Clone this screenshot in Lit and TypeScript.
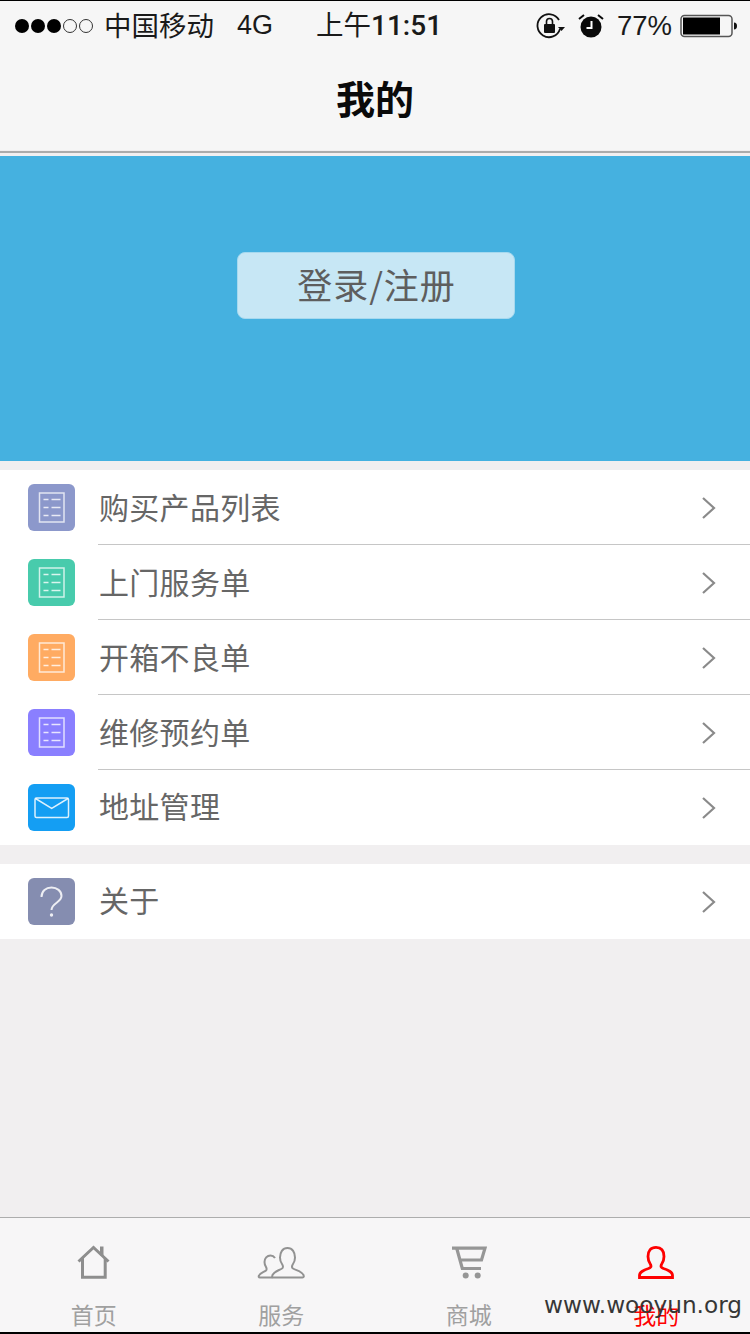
import { LitElement, html, css, svg } from 'lit';
import { customElement } from 'lit/decorators.js';

// document icon shared by the first four rows
const docIcon = svg`
  <rect x="11.500" y="9" width="24.500" height="29" fill="none" stroke="#fff" stroke-opacity=".75" stroke-width="1.500"/>
  <path d="M15.500 15.500h5M23.500 15.500h9M15.500 23.500h5M23.500 23.500h9M15.500 31.500h5M23.500 31.500h9" fill="none" stroke="#fff" stroke-opacity=".8" stroke-width="1.300"/>`;

const mailIcon = svg`
  <rect x="7" y="14" width="33.500" height="19.500" rx="1.500" fill="none" stroke="#fff" stroke-opacity=".85" stroke-width="1.500"/>
  <path d="M7.500 14.500l16.200 9.800L40 14.500" fill="none" stroke="#fff" stroke-opacity=".85" stroke-width="1.500"/>`;

const helpIcon = svg`
  <path d="M13.500 19c0-6 4.500-9.500 10-9.500s10 3.500 10 8.500c0 6.500-10 7-10 14" fill="none" stroke="#fff" stroke-opacity=".85" stroke-width="2"/>
  <circle cx="23.500" cy="37" r="1.700" fill="#fff" fill-opacity=".85"/>`;

const rows1 = [
  { label: '购买产品列表', color: '#8c98cb', icon: docIcon },
  { label: '上门服务单', color: '#48cbac', icon: docIcon },
  { label: '开箱不良单', color: '#ffab62', icon: docIcon },
  { label: '维修预约单', color: '#8a7fff', icon: docIcon },
  { label: '地址管理', color: '#149ef3', icon: mailIcon },
];

const rows2 = [{ label: '关于', color: '#858db0', icon: helpIcon }];

const tabs = [
  {
    label: '首页',
    width: 38,
    icon: svg`<path d="M3.500 16.500L18.500 2.500l15 14" fill="none" stroke="#8e8e8e" stroke-width="3"/>
      <path d="M25 1.500h3.500v9H25z" fill="#8e8e8e"/>
      <path d="M7.500 13v19.200h22.700V13" fill="none" stroke="#8e8e8e" stroke-width="3"/>`,
  },
  {
    label: '服务',
    width: 50,
    icon: svg`<path d="M16.500 32.500h30c1.500 0 1.500-1 1-2.500-1.500-3.500-7-4.500-10.500-6.500-1.500-1-1-3 0-4.500 1.500-2 2-4 2-6.500 0-5-2.500-9.500-7.500-9.500s-7.500 4.500-7.500 9.500c0 2.500.5 4.500 2 6.500 1 1.500 1.500 3.500 0 4.500-3.500 2-8 3-9.500 6.500-.5 1.500-.5 2.500 0 2.500z" fill="none" stroke="#929292" stroke-width="2"/>
      <path d="M16.500 32.500H4c-1.500 0-1.500-1-1-2 1-2.500 5-3.500 7-5 1-1 .5-2.500 0-3.500-1-1.500-1.500-3-1.500-5 0-3.500 2.500-6.500 6-6.500 2 0 3.500 1 4.500 2.500" fill="none" stroke="#929292" stroke-width="2"/>`,
  },
  {
    label: '商城',
    width: 38,
    icon: svg`<path d="M2 3.200H35L31.500 15H9.500M6.700 3.200l5.600 20.300H31" fill="none" stroke="#969696" stroke-width="3.200"/>
      <circle cx="15.700" cy="30.500" r="3" fill="#969696"/><circle cx="27.700" cy="30.500" r="3" fill="#969696"/>`,
  },
  {
    label: '我的',
    width: 38,
    active: true,
    icon: svg`<path d="M2.500 32.500v-2c0-4 4.500-5.500 9-7 2.500-1 3-2 2-4-1.500-2-2.500-5-2.500-8C11 5.500 14 2.300 19 2.300S27 5.500 27 11.500c0 3-1 6-2.500 8-1 2-.5 3 2 4 4.500 1.500 9 3 9 7v2z" fill="none" stroke="#fe0000" stroke-width="2.800"/>`,
  },
];

@customElement('app-root')
export class AppRoot extends LitElement {
  static styles = css`
    :host {
      display: flex;
      flex-direction: column;
      position: relative;
      width: 750px;
      height: 1334px;
      overflow: hidden;
      background: #f1eff0;
      font-family: 'Noto Sans CJK SC', 'Liberation Sans', sans-serif;
    }

    .top {
      background: #f6f6f6;
      border-top: 1px solid #000;
      height: 150px;
      box-sizing: border-box;
      flex: none;
    }

    .status {
      display: flex;
      align-items: center;
      height: 49px;
      color: #1a1a1a;
      font-size: 27.500px;
      line-height: 45px;
    }

    .dots {
      display: flex;
      gap: 2px;
      margin-left: 15px;
      margin-right: 11px;
    }

    .dot {
      width: 14px;
      height: 14px;
      border-radius: 50%;
      background: #000;
      box-sizing: border-box;
    }

    .dot.off {
      background: none;
      border: 1px solid #333;
    }

    .carrier {
      margin-bottom: 3px;
    }

    .net {
      margin-left: 23px;
      font-family: 'Liberation Sans', sans-serif;
      font-size: 27px;
    }

    .time {
      margin-left: 43px;
      margin-bottom: 3px;
    }

    .time span {
      font-family: Roboto, 'Liberation Sans', sans-serif;
      font-weight: 500;
      font-size: 28px;
    }

    .right {
      margin-left: auto;
      display: flex;
      align-items: center;
    }

    .pct {
      font-family: 'Liberation Sans', sans-serif;
      font-size: 27.500px;
      margin: 0 8px 0 13px;
    }

    .title {
      text-align: center;
      font-size: 39px;
      font-weight: 700;
      color: #0a0a0a;
      line-height: 94px;
      height: 100px;
    }

    .rule {
      flex: none;
      height: 2px;
      margin-top: 1px;
      background: #ababab;
    }

    .gap-white {
      flex: none;
      height: 3px;
      background: #f1eff0;
    }

    .banner {
      flex: none;
      height: 305px;
      background: #45b1e0;
      display: flex;
      justify-content: center;
      padding-top: 96px;
      padding-left: 1px;
      box-sizing: border-box;
    }

    .login {
      width: 278px;
      height: 67px;
      padding-left: 2px;
      border-radius: 8px;
      background: #c7e7f5;
      box-sizing: border-box;
      border: 1px solid #a6d9ef;
      color: #5e5e5e;
      font-size: 35px;
      line-height: 61px;
      text-align: center;
      letter-spacing: 1px;
    }

    .list {
      flex: none;
      background: #fff;
      margin-top: 9px;
    }

    .list.second {
      margin-top: 19px;
    }

    .row {
      display: flex;
      align-items: center;
      height: 75px;
      padding-left: 28px;
    }

    .icon {
      flex: none;
      width: 47px;
      height: 47px;
      border-radius: 6px;
      display: block;
    }

    .label {
      flex: 1;
      align-self: stretch;
      display: flex;
      align-items: center;
      margin-left: 23px;
      box-sizing: border-box;
      font-size: 30px;
      color: #666;
      border-bottom: 1px solid #c6c6c6;
    }

    .label span {
      padding: 0 0 3px 1px;
      letter-spacing: 0.3px;
    }

    .row:last-child .label {
      border-bottom: none;
    }

    .row:last-child .label span {
      padding-bottom: 5px;
    }

    .chev {
      margin-left: auto;
      margin-right: 33px;
      margin-top: 2px;
      display: block;
    }

    .row:last-child .chev {
      margin-top: 0;
    }

    .tabbar {
      flex: none;
      margin-top: auto;
      height: 117px;
      box-sizing: border-box;
      border-top: 1px solid #adadad;
      border-bottom: 2px solid #000;
      background: #f7f6f7;
      display: grid;
      grid-template-columns: repeat(4, 1fr);
    }

    .tab {
      display: flex;
      flex-direction: column;
      align-items: center;
      color: #a0a0a0;
      font-size: 23px;
      padding-top: 27px;
    }

    .tab.active {
      color: #fe0000;
    }

    .tab svg {
      display: block;
      height: 34px;
    }

    .tab span {
      margin-top: 20px;
      line-height: 30px;
    }

    .mark {
      position: absolute;
      left: 544px;
      top: 1290px;
      font-family: 'DejaVu Sans', sans-serif;
      font-size: 23.200px;
      line-height: 30px;
      color: #363636;
      white-space: nowrap;
    }
  `;

  private renderRow(r: { label: string; color: string; icon: unknown }) {
    return html`
      <div class="row">
        <svg class="icon" style="background:${r.color}" viewBox="0 0 47 47">${r.icon}</svg>
        <div class="label">
          <span>${r.label}</span>
          <svg class="chev" width="16" height="24" viewBox="0 0 16 24">
            <path d="M2 2l11 10L2 22" fill="none" stroke="#8a8a8a" stroke-width="2.200" />
          </svg>
        </div>
      </div>
    `;
  }

  render() {
    return html`
      <div class="top">
        <div class="status">
          <div class="dots">
            <i class="dot"></i><i class="dot"></i><i class="dot"></i>
            <i class="dot off"></i><i class="dot off"></i>
          </div>
          <span class="carrier">中国移动</span>
          <span class="net">4G</span>
          <span class="time">上午<span>11:51</span></span>
          <div class="right">
            <svg width="30" height="28" viewBox="0 0 30 28">
              <path d="M24 17a11.500 11.500 0 1 1-1-9" fill="none" stroke="#111" stroke-width="1.800" />
              <path d="M22 15h7l-3.500 4z" fill="#111" />
              <rect x="8" y="12" width="11" height="9" rx="1" fill="#111" />
              <path d="M10.500 12V9.500a3 3 0 0 1 6 0V12" fill="none" stroke="#111" stroke-width="1.600" />
            </svg>
            <svg style="margin-left:12px" width="26" height="26" viewBox="0 0 26 26">
              <circle cx="13" cy="14" r="10.500" fill="#0a0a0a" />
              <path d="M13.500 8v7H8.500" fill="none" stroke="#fff" stroke-width="2" />
              <path d="M1 6l5-4M25 6l-5-4" fill="none" stroke="#0a0a0a" stroke-width="2" />
            </svg>
            <span class="pct">77%</span>
            <svg style="margin-right:13px" width="57" height="24" viewBox="0 0 57 24">
              <rect x="1" y="1.500" width="51" height="21" rx="3.500" fill="none" stroke="#555" stroke-width="1.500" />
              <rect x="3" y="3.500" width="37" height="17" fill="#000" />
              <path d="M54 8.500c2 0 3 1.500 3 3.500s-1 3.500-3 3.500z" fill="#111" />
            </svg>
          </div>
        </div>
        <div class="title">我的</div>
      </div>
      <div class="rule"></div>
      <div class="gap-white"></div>
      <div class="banner"><div class="login">登录/注册</div></div>
      <div class="list">${rows1.map((r) => this.renderRow(r))}</div>
      <div class="list second">${rows2.map((r) => this.renderRow(r))}</div>
      <div class="tabbar">
        ${tabs.map(
          (t) => html`
            <div class="tab ${t.active ? 'active' : ''}">
              <svg viewBox="0 0 ${t.width} 34" width="${t.width}">${t.icon}</svg>
              <span>${t.label}</span>
            </div>
          `
        )}
      </div>
      <div class="mark">www.wooyun.org</div>
    `;
  }
}
